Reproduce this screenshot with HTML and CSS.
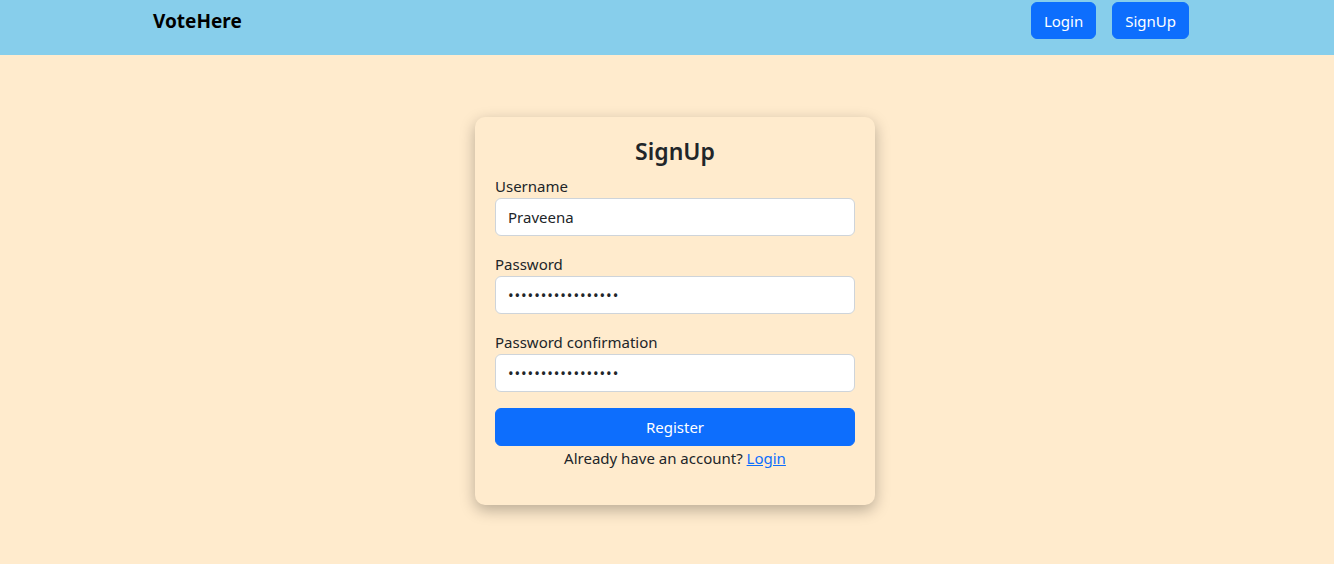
FILE: index.html
```html
<!DOCTYPE html>
<html lang="en">
<head>
<meta charset="utf-8">
<title>VoteHere - SignUp</title>
<link rel="stylesheet" href="styles.css">
</head>
<body>
<nav class="navbar">
  <a class="brand" href="#">VoteHere</a>
  <div class="nav-actions">
    <a class="btn btn-nav" href="#">Login</a>
    <a class="btn btn-nav" href="#">SignUp</a>
  </div>
</nav>
<main class="main">
  <form class="card">
    <h2 class="card-title">SignUp</h2>
    <div class="field">
      <label class="label" for="username">Username</label>
      <input class="input" id="username" type="text" value="Praveena">
    </div>
    <div class="field">
      <label class="label" for="password">Password</label>
      <input class="input input-secret" id="password" type="password" value="abcdefghijklmnopq">
    </div>
    <div class="field">
      <label class="label" for="password2">Password confirmation</label>
      <input class="input input-secret" id="password2" type="password" value="abcdefghijklmnopq">
    </div>
    <button class="btn btn-register" type="button">Register</button>
    <p class="switch">Already have an account? <a href="#">Login</a></p>
  </form>
</main>
</body>
</html>
```
FILE: styles.css
```css
* { box-sizing: border-box; }
html, body { margin: 0; padding: 0; }
body {
  background: #ffebcd;
  font-family: "Noto Sans", "Liberation Sans", sans-serif;
  font-size: 16px;
  line-height: 1.5;
  color: #212529;
  height: 564px;
  overflow: hidden;
}
.navbar {
  background: #87ceeb;
  height: 55px;
  display: flex;
  justify-content: space-between;
  align-items: flex-start;
  padding: 2px 145px 0 153px;
}
.brand {
  color: #000;
  text-decoration: none;
  font-weight: 700;
  font-size: 19px;
  line-height: 38px;
}
.nav-actions {
  display: flex;
  gap: 16px;
}
.btn {
  display: inline-block;
  background: #0d6efd;
  color: #fff;
  border: 1px solid #0d6efd;
  border-radius: 6px;
  text-decoration: none;
  font-family: inherit;
  font-size: 15px;
  line-height: 24px;
  text-align: center;
}
.btn-nav {
  padding: 6px 12px;
  height: 37px;
}
.btn-nav:first-child { margin-left: -1px; }
.main {
  display: flex;
  justify-content: center;
  padding: 62px 0 0 16px;
}
.card {
  width: 400px;
  background: #ffebcd;
  border-radius: 10px;
  padding: 20px 20px 19px;
  box-shadow: 0 5px 15px rgba(0, 0, 0, 0.28);
  display: flex;
  flex-direction: column;
}
.card-title {
  margin: 0 0 8px;
  text-align: center;
  font-size: 23px;
  line-height: 29px;
  font-weight: 600;
}
.field {
  display: flex;
  flex-direction: column;
  margin-bottom: 16px;
}
.label {
  font-size: 15px;
  line-height: 24px;
}
.input {
  height: 38px;
  border: 1px solid #ced4da;
  border-radius: 6px;
  background: #fff;
  padding: 6px 12px;
  font-family: inherit;
  font-size: 15px;
  color: #212529;
  outline: none;
}
.input-secret {
  letter-spacing: 0.9px;
}
.btn-register {
  height: 38px;
  width: 100%;
  cursor: pointer;
}
.switch {
  margin: 0 0 16px;
  text-align: center;
  font-size: 15px;
  line-height: 24px;
}
.switch a { color: #0d6efd; }
```
